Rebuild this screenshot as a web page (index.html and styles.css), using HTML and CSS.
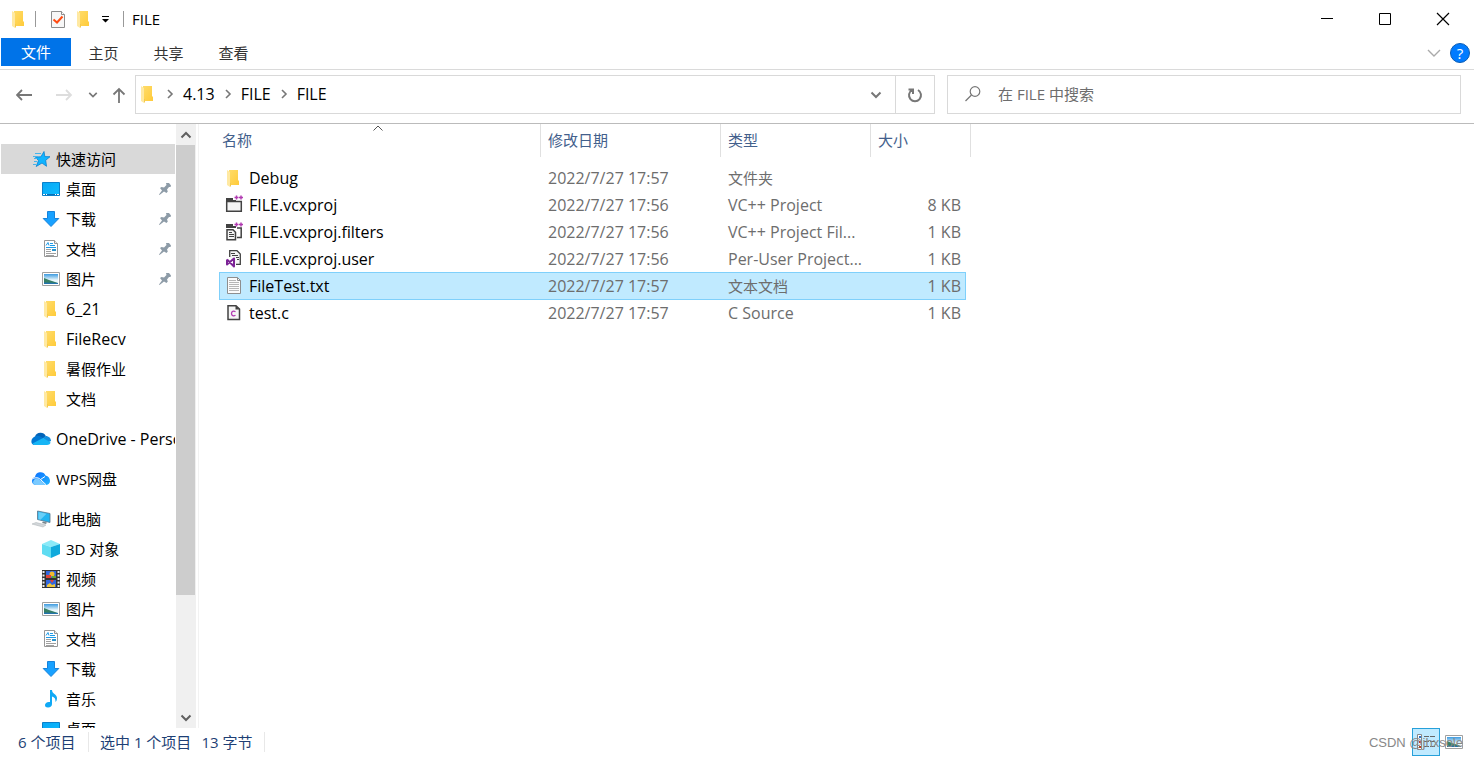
FILE: index.html
```html
<!DOCTYPE html>
<html lang="zh-CN">
<head>
<meta charset="utf-8">
<title>FILE</title>
<link rel="stylesheet" href="styles.css">
</head>
<body>
<svg class="sprite" aria-hidden="true">
  <defs>
    <linearGradient id="gFolder" x1="0" y1="0" x2="1" y2="1"><stop offset="0" stop-color="#ffdc6a"/><stop offset="1" stop-color="#ffcb3a"/></linearGradient>
    <linearGradient id="gSky" x1="0" y1="0" x2="0" y2="1"><stop offset="0" stop-color="#3d9be0"/><stop offset=".6" stop-color="#e8f7fc"/></linearGradient>
    <linearGradient id="gDesk" x1="0" y1="0" x2="1" y2="1"><stop offset="0" stop-color="#08a8f5"/><stop offset="1" stop-color="#0fbcff"/></linearGradient>
    <linearGradient id="gWps" x1="0" y1="0" x2="1" y2="1"><stop offset="0" stop-color="#0a6cff"/><stop offset="1" stop-color="#22b4ff"/></linearGradient>
  </defs>
  <symbol id="folder" viewBox="0 0 20 20">
    <path fill="url(#gFolder)" d="M5 2h9v10l1 1v4H5z"/><path fill="#ffe9a2" d="M3 2l3 2v15l-3-2z"/><path fill="#f3c94f" d="M6 15v4l1-1v-3z"/>
  </symbol>
  <symbol id="star" viewBox="0 0 20 20">
    <path fill="#10b4ff" stroke="#0a82d0" stroke-width=".8" d="M13 2.500l.8 5.100 5.200.1-4.300 3.600.8 6-4.500-3.300-5.800 3.500 2.300-5.900-3-3.500 5.400-.3z"/>
    <path stroke="#46b4ea" d="M4 4.500h6M2 7.500h5M3 9.500h3M3 12.500h3M2 15.500h3" fill="none"/>
  </symbol>
  <symbol id="desktop" viewBox="0 0 20 20">
    <path fill="url(#gDesk)" stroke="#0a80cb" d="M1.500 3.500h17v13h-17z"/><path stroke="#0a6fb5" d="M1 15.500h18"/><path stroke="#fff" d="M2 15.500h2M5 15.500h1M14 15.500h1M16 15.500h2"/>
  </symbol>
  <symbol id="down" viewBox="0 0 20 20"><path fill="#18a1ff" stroke="#1683dc" d="M6.500 2.500h7v7h4.300L10 17.500 2.200 9.500h4.300z"/></symbol>
  <symbol id="doc" viewBox="0 0 20 20">
    <path fill="#fff" stroke="#979797" d="M3.500 1.500h10l3 3v13h-13z"/><path fill="#eee" stroke="#979797" d="M13.500 1.500v3h3"/>
    <path stroke="#1d9be8" d="M5 6.500l2-3 1 3M9 4.500h3M5 8.500h10M9 6.500h5" fill="none"/><path stroke="#a0a0a0" d="M5 10.500h5M5 12.500h5M5 14.500h10M5 16.500h8"/><path fill="#2c92c8" d="M11 10h4v2h-4z"/>
  </symbol>
  <symbol id="picture" viewBox="0 0 20 20">
    <path fill="#fff" stroke="#a0a0a0" d="M1.500 3.500h17v13h-17z"/><path fill="url(#gSky)" d="M3 5h14v10H3z"/><path fill="#367f65" d="M3 9l5 2 9 3v1H3z"/><path fill="#2373ad" d="M3 13.500l14 .5v1H3z"/>
  </symbol>
  <symbol id="onedrive" viewBox="0 0 20 20">
    <path fill="#0364b8" d="M4 7.500a6 6 0 0 1 10.800-.5L10 12z"/><path fill="#0078d4" d="M5 7c3-.8 4.800.8 7 2l-9 7C-1 15-.5 8.500 5 7z"/><path fill="#1490df" d="M12 9l2.500-2C18 7 20 9.500 20 12l-4 2z"/><path fill="#16b5f5" d="M1.500 14.500L12 9l7.600 4.500c-.6 1.800-2 2.500-3.600 2.500H5c-1.500 0-2.700-.5-3.500-1.500z"/>
  </symbol>
  <symbol id="wps" viewBox="0 0 20 20">
    <path fill="url(#gWps)" d="M4 8a5.500 5.500 0 0 1 10.500-1.500C17.500 7 19 9.500 19 12c0 2.500-2 4-4.500 4h-9C2.500 16 1 14.500 1 12s1.500-3.700 3-4z"/><path fill="#7bcaff" d="M2 14c0-4 4-6 6.500-3.500L15 16H5c-1.500 0-2.500-.8-3-2z"/><path stroke="#fff" fill="none" d="M1.500 10c3-2 6-1.500 8 .5l5.500 5.200M9.500 10.500L14 7.500"/>
  </symbol>
  <symbol id="pc" viewBox="0 0 20 20">
    <path fill="#24b4f0" stroke="#57758b" stroke-width=".8" d="M6.500 2l12.500 2.500v9L6.500 10.500z"/><path fill="#69cff8" d="M7.500 3l8 1.700-6 6-2-.5z"/><path fill="#79858d" d="M12 12.500l4 1-1 1.500-4-1z"/><path fill="#d3d7da" stroke="#b2b8bc" stroke-width=".6" d="M1 15l4-1.500 10 2.500-3 2z"/>
  </symbol>
  <symbol id="cube" viewBox="0 0 20 20"><path fill="#8beaf8" d="M1 5l9-4 9 4-9 3z"/><path fill="#5fdcf2" d="M1 5l9 3v11l-9-4z"/><path fill="#10aadc" d="M19 5l-9 3v11l9-4z"/></symbol>
  <symbol id="video" viewBox="0 0 20 20">
    <path fill="#333" d="M1 1h18v18H1z"/><path stroke="#eee" stroke-width="2" stroke-dasharray="2 1.500" d="M2.500 2v17M17.500 2v17"/><path fill="#3268e0" d="M5 2h10v7H5zM5 11h10v7H5z"/><circle cx="11" cy="5" r="2.500" fill="#f2bd2c"/><path fill="#df4237" d="M5 6h5v3H5zM9 11h4l-2 3z"/><path fill="#65a834" d="M11 7h4v2h-4z"/><path fill="#f0c83c" d="M6 16l3-2 2 2 3-1v3H6z"/>
  </symbol>
  <symbol id="music" viewBox="0 0 20 20"><path fill="#10a9f5" d="M9 1h2c0 4 5 4 5 8 0 2-.6 3-1.500 4 .3-3-1-5-3.500-5.500V15c0 2-1.500 3.500-4 3.500S4 17.500 4 16c0-2 2-3.500 5-3z"/></symbol>
  <symbol id="pin" viewBox="0 0 14 14"><path fill="#8d9ba7" d="M8 1h3l2 2.500-.5 1.500h-1.500l-2 2.500.8 2-1.300 1.500-2.500-1.500L1.500 13l-.5-.5L4 8.500 2 6l1.500-1L6 5.500 8.500 3z"/></symbol>
  <symbol id="check" viewBox="0 0 20 20"><path fill="#f7f7f7" stroke="#8d8d8d" d="M3.500 2.500h10l3 3v13h-13z"/><path fill="#fff" stroke="#8d8d8d" d="M13.500 2.500v3h3"/><path fill="none" stroke="#ff4b12" stroke-width="2" d="M5.500 10.500l3.500 3 5.500-6"/></symbol>
  <symbol id="proj" viewBox="0 0 20 20"><path fill="#f5f5f5" stroke="#424242" stroke-width="1.500" d="M2.700 6.500h14.600v9.800H2.700z"/><path fill="#424242" d="M2 3h7v2h3v2H2z"/><use href="#plus"/></symbol>
  <symbol id="filters" viewBox="0 0 20 20"><path fill="none" stroke="#424242" stroke-width="1.500" d="M13 6h4.200v9.500H13"/><path fill="#424242" d="M2 2h7v2h3v2H2z"/><path fill="#f5f5f5" stroke="#424242" stroke-width="1.500" d="M3 7.700h6l2.500 2.500v7.500H3z"/><path stroke="#424242" d="M5 10.500h3M5 12.500h5M5 14.500h5"/><use href="#plus"/></symbol>
  <symbol id="plus" viewBox="0 0 20 20"><path stroke="#b13bb1" stroke-width="1.500" d="M10.500 2.500h4M12.500.5v4M15 2.500h4M17 .5v4"/></symbol>
  <symbol id="vsuser" viewBox="0 0 20 20"><path fill="#f5f5f5" stroke="#424242" stroke-width="1.300" d="M5.700 8V1.700H13L16.300 5v10.300H12"/><path stroke="#424242" d="M7 4.500h4M8 6.500h6M12 8.500h3M13 10.500h2"/><path fill="none" stroke="#7c2396" stroke-width="2" stroke-linejoin="round" d="M3 10.500v5l7-6v8l-7-7"/></symbol>
  <symbol id="txt" viewBox="0 0 20 20"><path fill="#fbfbfb" stroke="#8e8e8e" d="M3.500 1.500h10l3 3v13h-13z"/><path fill="none" stroke="#8e8e8e" d="M13.500 1.500v3h3"/><path stroke="#b6b6b6" d="M5 4.500h7M5 6.500h10M5 8.500h10M5 10.500h10M5 12.500h10M5 14.500h10"/></symbol>
  <symbol id="csrc" viewBox="0 0 20 20"><path fill="#f5f5f5" stroke="#424242" stroke-width="1.500" d="M4 2.700h8L15.500 6v10.500H4z"/><path fill="#424242" d="M11.500 2.500v4h4z"/><path fill="none" stroke="#b13bb1" stroke-width="1.300" d="M11.500 8.700c-2-1.200-4-.3-4 1.800s2 3 4 1.800"/></symbol>
  <symbol id="chev" viewBox="0 0 12 12"><path fill="none" stroke="currentColor" stroke-width="2" d="M1.500 3.500L6 8l4.500-4.500"/></symbol>
  <symbol id="right" viewBox="0 0 10 10"><path fill="none" stroke="#777" stroke-width="1.600" d="M3 1l4 4-4 4"/></symbol>
</svg>

<header class="titlebar">
  <svg class="icon"><use href="#folder"/></svg>
  <span class="divider"></span>
  <button class="plain quick" aria-label="属性"><svg class="icon"><use href="#check"/></svg></button>
  <button class="plain" aria-label="新建文件夹"><svg class="icon"><use href="#folder"/></svg></button>
  <button class="plain more" aria-label="自定义"><svg width="9" height="9" viewBox="0 0 9 9"><path d="M1 1h7v1H1zM1 4h7L4.500 7.500z"/></svg></button>
  <span class="divider"></span>
  <h1 class="title">FILE</h1>
  <div class="window-buttons">
    <button class="plain" aria-label="最小化"><svg width="14" height="14" viewBox="0 0 14 14"><path stroke="#000" d="M1 6.500h12"/></svg></button>
    <button class="plain" aria-label="最大化"><svg width="14" height="14" viewBox="0 0 14 14"><path fill="none" stroke="#000" d="M1.500 1.500h11v11h-11z"/></svg></button>
    <button class="plain" aria-label="关闭"><svg width="14" height="14" viewBox="0 0 14 14"><path stroke="#000" stroke-width="1.200" d="M1 1l12 12M13 1L1 13"/></svg></button>
  </div>
</header>

<nav class="tabs">
  <button class="tab tab-file">文件</button>
  <button class="tab">主页</button>
  <button class="tab">共享</button>
  <button class="tab">查看</button>
  <div class="tabs-end">
    <button class="plain" aria-label="展开功能区"><svg width="14" height="14" viewBox="0 0 14 14"><path fill="none" stroke="#aaa" stroke-width="1.400" d="M1 4l6 6 6-6"/></svg></button>
    <button class="help" aria-label="帮助">?</button>
  </div>
</nav>

<div class="navbar">
  <div class="arrows">
    <button class="plain" aria-label="后退"><svg width="18" height="16" viewBox="0 0 18 16"><path fill="none" stroke="#777" stroke-width="1.800" d="M16 8H1M6 3L1 8l5 5"/></svg></button>
    <button class="plain forward" aria-label="前进"><svg width="18" height="16" viewBox="0 0 18 16"><path fill="none" stroke="#ddd" stroke-width="1.800" d="M0 8h15M10 3l5 5-5 5"/></svg></button>
    <button class="plain recent" aria-label="最近位置"><svg width="10" height="10"><use href="#chev"/></svg></button>
    <button class="plain up" aria-label="上移"><svg width="14" height="16" viewBox="0 0 14 16"><path fill="none" stroke="#777" stroke-width="1.800" d="M7 16V2M1.500 7.500L7 2l5.500 5.500"/></svg></button>
  </div>
  <div class="address">
    <svg class="icon"><use href="#folder"/></svg>
    <svg class="crumb-arrow"><use href="#right"/></svg><a href="#" class="crumb">4.13</a>
    <svg class="crumb-arrow"><use href="#right"/></svg><a href="#" class="crumb">FILE</a>
    <svg class="crumb-arrow"><use href="#right"/></svg><a href="#" class="crumb">FILE</a>
    <button class="plain drop" aria-label="历史"><svg width="12" height="12"><use href="#chev"/></svg></button>
    <button class="plain refresh" aria-label="刷新"><svg width="16" height="16" viewBox="0 0 16 16"><path fill="none" stroke="#777" stroke-width="2" d="M11 3a6 6 0 1 1-6 0M1.500 2.500H6V7"/></svg></button>
  </div>
  <label class="search">
    <svg width="18" height="18" viewBox="0 0 18 18"><circle cx="11" cy="6.500" r="4.800" fill="none" stroke="#777" stroke-width="1.200"/><path stroke="#777" stroke-width="1.200" d="M7.500 10L1.500 16"/></svg>
    <input type="text" placeholder="在 FILE 中搜索" aria-label="搜索">
  </label>
</div>

<div class="main">
  <nav class="sidebar">
    <div class="tree">
      <a href="#" class="node root selected"><svg class="icon"><use href="#star"/></svg><span>快速访问</span></a>
      <a href="#" class="node"><svg class="icon"><use href="#desktop"/></svg><span>桌面</span><svg class="pin"><use href="#pin"/></svg></a>
      <a href="#" class="node"><svg class="icon"><use href="#down"/></svg><span>下载</span><svg class="pin"><use href="#pin"/></svg></a>
      <a href="#" class="node"><svg class="icon"><use href="#doc"/></svg><span>文档</span><svg class="pin"><use href="#pin"/></svg></a>
      <a href="#" class="node"><svg class="icon"><use href="#picture"/></svg><span>图片</span><svg class="pin"><use href="#pin"/></svg></a>
      <a href="#" class="node latin"><svg class="icon"><use href="#folder"/></svg><span>6_21</span></a>
      <a href="#" class="node latin"><svg class="icon"><use href="#folder"/></svg><span>FileRecv</span></a>
      <a href="#" class="node"><svg class="icon"><use href="#folder"/></svg><span>暑假作业</span></a>
      <a href="#" class="node"><svg class="icon"><use href="#folder"/></svg><span>文档</span></a>
      <a href="#" class="node root latin"><svg class="icon"><use href="#onedrive"/></svg><span>OneDrive - Personal</span></a>
      <a href="#" class="node root"><svg class="icon"><use href="#wps"/></svg><span>WPS网盘</span></a>
      <a href="#" class="node root"><svg class="icon"><use href="#pc"/></svg><span>此电脑</span></a>
      <a href="#" class="node"><svg class="icon"><use href="#cube"/></svg><span>3D 对象</span></a>
      <a href="#" class="node"><svg class="icon"><use href="#video"/></svg><span>视频</span></a>
      <a href="#" class="node"><svg class="icon"><use href="#picture"/></svg><span>图片</span></a>
      <a href="#" class="node"><svg class="icon"><use href="#doc"/></svg><span>文档</span></a>
      <a href="#" class="node"><svg class="icon"><use href="#down"/></svg><span>下载</span></a>
      <a href="#" class="node"><svg class="icon"><use href="#music"/></svg><span>音乐</span></a>
      <a href="#" class="node"><svg class="icon"><use href="#desktop"/></svg><span>桌面</span></a>
    </div>
    <div class="scrollbar">
      <button class="plain scroll-btn flip" aria-label="向上滚动"><svg width="12" height="12"><use href="#chev"/></svg></button>
      <div class="track"><div class="thumb"></div></div>
      <button class="plain scroll-btn" aria-label="向下滚动"><svg width="12" height="12"><use href="#chev"/></svg></button>
    </div>
  </nav>

  <main class="content">
    <table class="files">
      <colgroup><col class="c-name"><col class="c-date"><col class="c-type"><col class="c-size"><col class="c-end"></colgroup>
      <thead>
        <tr>
          <th><button class="sort">名称<svg class="sorted" width="10" height="6" viewBox="0 0 10 6"><path fill="none" stroke="#555" d="M.5 5.500L5 1l4.500 4.500"/></svg></button></th>
          <th><button class="sort">修改日期</button></th>
          <th><button class="sort">类型</button></th>
          <th colspan="2"><button class="sort">大小</button></th>
        </tr>
      </thead>
      <tbody>
        <tr><td><div class="file"><svg class="icon"><use href="#folder"/></svg>Debug</div></td><td>2022/7/27 17:57</td><td class="han">文件夹</td><td></td></tr>
        <tr><td><div class="file"><svg class="icon"><use href="#proj"/></svg>FILE.vcxproj</div></td><td>2022/7/27 17:56</td><td>VC++ Project</td><td>8 KB</td></tr>
        <tr><td><div class="file"><svg class="icon"><use href="#filters"/></svg>FILE.vcxproj.filters</div></td><td>2022/7/27 17:56</td><td>VC++ Project Fil...</td><td>1 KB</td></tr>
        <tr><td><div class="file"><svg class="icon"><use href="#vsuser"/></svg>FILE.vcxproj.user</div></td><td>2022/7/27 17:56</td><td>Per-User Project...</td><td>1 KB</td></tr>
        <tr class="picked"><td><div class="file"><svg class="icon"><use href="#txt"/></svg>FileTest.txt</div></td><td>2022/7/27 17:57</td><td class="han">文本文档</td><td>1 KB</td></tr>
        <tr><td><div class="file"><svg class="icon"><use href="#csrc"/></svg>test.c</div></td><td>2022/7/27 17:57</td><td>C Source</td><td>1 KB</td></tr>
      </tbody>
    </table>
  </main>
</div>

<footer class="status">
  <span class="count">6 个项目</span>
  <span class="picked-count">选中 1 个项目</span>
  <span class="bytes">13 字节</span>
  <div class="views">
    <button class="view active" aria-label="详细信息"><svg width="20" height="18" viewBox="0 0 20 18"><path fill="#fff" stroke="#888" d="M1.500 1.500h4v15h-4z"/><path fill="#2a72c8" d="M3 3h2v2H3z"/><path fill="#c03a20" d="M3 8h2v2H3zM3 13h2v2H3z"/><path stroke="#666" d="M8 3.500h5M14 3.500h5M8 8.500h5M14 8.500h5M8 13.500h5M14 13.500h5"/></svg></button>
    <button class="view" aria-label="大图标"><svg class="icon"><use href="#picture"/></svg></button>
  </div>
  <span class="watermark">CSDN @jhxsole</span>
</footer>
</body>
</html>
```
FILE: styles.css
```css
* { box-sizing: border-box; }
body {
  margin: 0;
  height: 100vh;
  display: flex;
  flex-direction: column;
  overflow: hidden;
  background: #fff;
  color: #000;
  font: 15px/20px "Open Sans", "Noto Sans CJK SC", sans-serif;
}
button, input { font: inherit; color: inherit; }
a { color: inherit; text-decoration: none; }
svg { display: block; flex: none; }
.sprite { position: absolute; width: 0; height: 0; }
.icon { width: 20px; height: 20px; }
.plain {
  display: flex;
  align-items: center;
  justify-content: center;
  padding: 0;
  border: 0;
  background: none;
  color: #777;
}

.titlebar { display: flex; align-items: center; height: 38px; padding-left: 9px; }
.divider { width: 1px; height: 16px; margin-left: 6px; background: #999; }
.quick { margin: 0 6px 0 12px; }
.more { margin: 0 7px; }
.title { margin: 0 0 0 8px; font-size: 15px; font-weight: 400; line-height: 20px; }
.window-buttons { display: flex; margin-left: auto; padding-right: 2px; }
.window-buttons .plain { width: 58px; height: 38px; }

.tabs { display: flex; align-items: flex-start; height: 32px; padding-left: 1px; border-bottom: 1px solid #dadada; }
.tab { width: 65px; height: 30px; padding: 0; border: 0; background: none; color: #333; }
.tab-file { width: 70px; height: 28px; background: #0073e8; color: #fff; }
.tabs-end { display: flex; align-items: center; gap: 9px; height: 30px; margin-left: auto; padding-right: 4px; }
.help { width: 20px; height: 20px; padding: 0; border: 1px solid #0a5cb4; border-radius: 50%; background: #007bff; color: #fff; line-height: 18px; }

.navbar { display: flex; height: 54px; padding: 5px 13px 9px 16px; border-bottom: 1px solid #bbb; }
.arrows { display: flex; align-items: center; width: 119px; }
.forward { margin-left: 22px; }
.recent { margin-left: 14px; }
.up { margin-left: 14px; }
.address { display: flex; align-items: center; flex: 1 1 800px; padding-left: 2px; border: 1px solid #d9d9d9; }
.address .icon, .crumb-arrow, .crumb { margin-bottom: 2px; }
.crumb-arrow { width: 10px; height: 10px; margin-left: 8px; margin-right: 8px; }
.address .icon + .crumb-arrow { margin-left: 7px; }
.crumb { font-size: 16px; }
.drop { width: 38px; height: 37px; margin-left: auto; }
.refresh { width: 39px; height: 37px; border-left: 1px solid #d9d9d9; }
.search { display: flex; align-items: center; gap: 16px; flex: 1 1 514px; margin-left: 12px; padding: 0 0 2px 16px; border: 1px solid #d9d9d9; }
.search input { flex: 1; min-width: 0; padding: 0; border: 0; outline: 0; background: none; }
.search input::placeholder { color: #6d6d6d; opacity: 1; }

.main { display: flex; flex: 1; min-height: 0; }
.sidebar { display: flex; flex: none; width: 199px; padding-right: 2px; border-right: 1px solid #f2f2f2; }
.tree { flex: 1; min-width: 0; padding: 20px 1px 0 1px; overflow: hidden; }
.node { display: flex; align-items: center; gap: 5px; height: 30px; padding-left: 40px; white-space: nowrap; overflow: hidden; }
.latin { font-size: 16px; }
.root { padding-left: 30px; }
.node + .root { margin-top: 10px; }
.selected { background: #d9d9d9; }
.pin { width: 14px; height: 14px; margin: 0 3px 0 auto; }
.scrollbar { display: flex; flex-direction: column; width: 20px; background: #f0f0f0; }
.scroll-btn { height: 21px; padding-right: 1px; color: #606060; }
.flip svg { transform: rotate(180deg); }
.track { flex: 1; }
.thumb { width: 19px; height: 80%; background: #cdcdcd; }

.content { flex: 1; min-width: 0; padding-left: 20px; }
.files { width: 752px; table-layout: fixed; border-collapse: separate; border-spacing: 0; font-size: 16px; color: #6d6d6d; }
.c-name { width: 322px; }
.c-date { width: 180px; }
.c-type { width: 150px; }
.c-size { width: 95px; }
.c-end { width: 5px; }
.files th { padding: 0 0 7px; font-weight: 400; }
.sort { position: relative; display: block; width: 100%; height: 33px; padding: 0 7px 2px; border: 0; border-right: 1px solid #e0e0e0; background: none; color: #43608c; font-size: 15px; text-align: left; }
th:first-child .sort { padding-left: 3px; }
.sorted { position: absolute; top: 1px; left: 50%; margin-left: -7px; }
.files td { height: 27px; padding: 0 7px; line-height: 20px; white-space: nowrap; }
.files td:first-child { padding-left: 5px; color: #000; }
.files td:nth-child(4) { padding-right: 5px; text-align: right; }
.files .han { font-size: 15px; }
.file { display: flex; align-items: center; gap: 5px; }
.picked td { background: #c0eaff; box-shadow: inset 0 1px #7fd0fb, 0 1px #7fd0fb; }
.picked td:first-child { box-shadow: inset 1px 1px #7fd0fb, 0 1px #7fd0fb; }
.picked td:last-child { box-shadow: inset -1px 1px #7fd0fb, 0 1px #7fd0fb; }

.status { position: relative; display: flex; align-items: center; flex: none; height: 30px; padding: 0 6px 2px 18px; color: #1e3f75; }
.count { width: 71px; border-right: 1px solid #e8e8e8; }
.picked-count { margin-left: 11px; }
.bytes { margin-left: 10px; padding-right: 12px; border-right: 1px solid #e8e8e8; }
.views { display: flex; margin-left: auto; }
.view { display: flex; align-items: center; justify-content: center; width: 28px; height: 28px; padding: 0; border: 1px solid transparent; background: none; }
.active { border-color: #26a0da; background: #c0eaff; }
.watermark { position: absolute; right: 11px; bottom: 5px; color: #888; font: 13px/20px "Liberation Sans", sans-serif; }
```
